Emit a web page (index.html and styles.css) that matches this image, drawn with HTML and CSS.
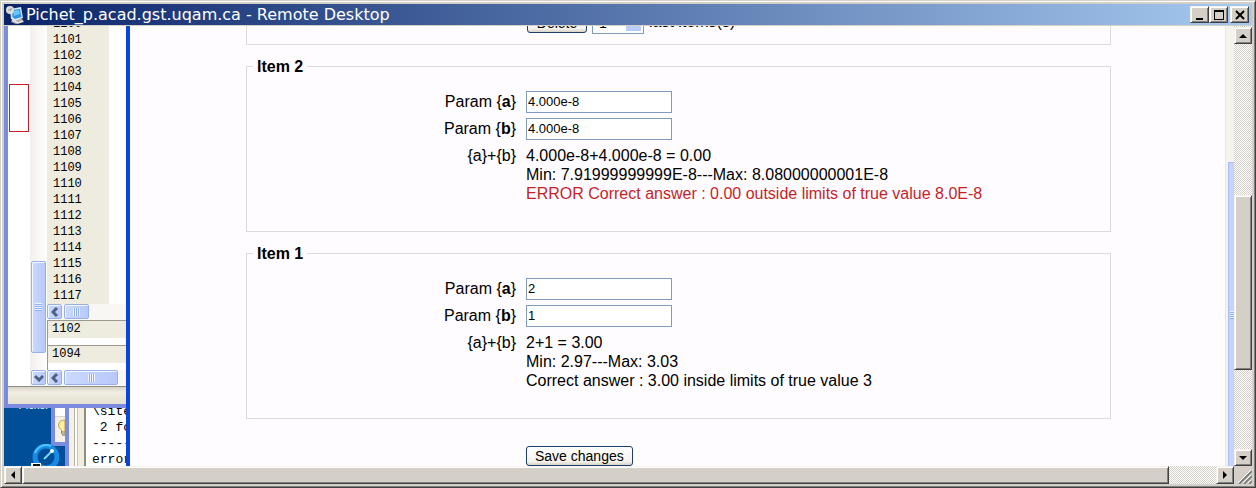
FILE: index.html
```html
<!DOCTYPE html>
<html lang="en">
<head>
<meta charset="utf-8">
<title>Pichet_p.acad.gst.uqam.ca - Remote Desktop</title>
<link rel="stylesheet" href="styles.css">
</head>
<body>
<div class="window">
  <header class="titlebar">
    <svg class="app-icon" viewBox="0 0 18 18" aria-hidden="true">
      <path d="M7 13h9l2 3-8 2-5-2z" fill="#a9aaa9"/>
      <path d="M4 3 15 1l2 11-8 3-4-2z" fill="#d4e6f4"/>
      <path d="M6 4 14 3l1.500 8L9 13 6.500 11z" fill="#2d93e6"/>
      <path d="M7 5l6-1 1 4-6 2z" fill="#6cc4f8"/>
      <path d="M6 14 12 17 17 15" stroke="#e8e7e4" stroke-width="1.500" fill="none"/>
      <circle cx="4" cy="4" r="4" fill="#dcdcd8"/><path d="M2 4h3V2" stroke="#8b8f96" fill="none"/>
    </svg>
    <h1 class="title">Pichet_p.acad.gst.uqam.ca - Remote Desktop</h1>
    <div class="controls">
      <button class="classic caption" aria-label="Minimize"><svg width="12" height="12" viewBox="0 0 12 12"><path d="M2 9h7v2H2z"/></svg></button>
      <button class="classic caption" aria-label="Maximize"><svg width="12" height="12" viewBox="0 0 12 12"><path d="M1 1h10v10H1zM2 3v7h8V3z" fill-rule="evenodd"/></svg></button>
      <button class="classic caption close" aria-label="Close"><svg width="12" height="12" viewBox="0 0 12 12"><path d="M2 2l8 8M10 2l-8 8" stroke="#000" stroke-width="2"/></svg></button>
    </div>
  </header>

  <div class="client">
    <aside class="behind">
      <section class="editor">
        <div class="panes">
          <div class="overview"><div class="marker"></div></div>
          <div class="xp-track">
            <div class="xp-thumb tall"><i class="grip"></i></div>
            <button class="xp-button" aria-label="Scroll down"><svg width="10" height="8" viewBox="0 0 10 8"><path d="M1 2l4 4 4-4"/></svg></button>
          </div>
          <div class="code">
            <ol class="lines">
              <li>1100</li><li>1101</li><li>1102</li><li>1103</li><li>1104</li><li>1105</li><li>1106</li><li>1107</li><li>1108</li><li>1109</li><li>1110</li><li>1111</li><li>1112</li><li>1113</li><li>1114</li><li>1115</li><li>1116</li><li>1117</li>
            </ol>
            <div class="xp-row">
              <button class="xp-button" aria-label="Scroll left"><svg width="8" height="10" viewBox="0 0 8 10"><path d="M6 1L2 5l4 4"/></svg></button>
              <div class="xp-thumb short"><i class="grip side"></i></div>
            </div>
            <div class="split"><span>1102</span></div>
            <div class="split"><span>1094</span></div>
            <div class="xp-row">
              <button class="xp-button" aria-label="Scroll left"><svg width="8" height="10" viewBox="0 0 8 10"><path d="M6 1L2 5l4 4"/></svg></button>
              <div class="xp-thumb wide"><i class="grip side"></i></div>
            </div>
          </div>
        </div>
        <div class="status"></div>
      </section>
      <section class="desktop">
        <div class="wallpaper">
          <span class="icon-label">Picker</span>
          <svg class="clock" width="28" height="22" viewBox="0 0 28 22" aria-hidden="true">
            <circle cx="15" cy="13" r="11" fill="none" stroke="#168ce5" stroke-width="5"/>
            <path d="M4 9A12 12 0 0 1 20 2" fill="none" stroke="#55c4ff" stroke-width="2"/>
            <path d="M13 15l8-8" stroke="#78d6ff" stroke-width="2"/><circle cx="21" cy="7" r="2" fill="#fff"/>
            <path d="M0 19h10v3H0z" fill="#fff"/><path d="M2 20h7v2H2z" fill="#111"/>
          </svg>
        </div>
        <div class="tool">
          <div class="tool-body">
            <svg width="10" height="20" viewBox="0 0 10 20" aria-hidden="true"><path d="M10 2Q4 2 3.500 7q0 3 3 5v4H10z" fill="#fff0a0" stroke="#bd9f4e"/><path d="M6 14h4M7 17h3" stroke="#777"/></svg>
          </div>
        </div>
        <div class="gutter"></div>
        <pre class="console">\site
 2 fo
-----
error</pre>
      </section>
    </aside>

    <main class="page">
      <form class="form">
        <div class="set first">
          <div class="delete-row">
            <button type="button" class="xp-push">Delete</button>
            <select class="count" id="count"><option>1</option></select>
            <label for="count">last items(s)</label>
          </div>
        </div>
        <fieldset class="set">
          <legend>Item 2</legend>
          <div class="grid">
            <label for="a2">Param {<b>a</b>}</label><input id="a2" type="text" value="4.000e-8">
            <label for="b2">Param {<b>b</b>}</label><input id="b2" type="text" value="4.000e-8">
            <span class="name">{a}+{b}</span>
            <div class="result">
              <p>4.000e-8+4.000e-8 = 0.00</p>
              <p>Min: 7.91999999999E-8---Max: 8.08000000001E-8</p>
              <p class="error">ERROR Correct answer : 0.00 outside limits of true value 8.0E-8</p>
            </div>
          </div>
        </fieldset>
        <fieldset class="set">
          <legend>Item 1</legend>
          <div class="grid">
            <label for="a1">Param {<b>a</b>}</label><input id="a1" type="text" value="2">
            <label for="b1">Param {<b>b</b>}</label><input id="b1" type="text" value="1">
            <span class="name">{a}+{b}</span>
            <div class="result">
              <p>2+1 = 3.00</p>
              <p>Min: 2.97---Max: 3.03</p>
              <p>Correct answer : 3.00 inside limits of true value 3</p>
            </div>
          </div>
        </fieldset>
        <div class="submit"><button type="button" class="xp-push">Save changes</button></div>
      </form>
    </main>

    <div class="inner-scroll"><div class="inner-thumb"><i class="grip"></i></div></div>

    <div class="scroll vertical">
      <button class="classic" aria-label="Scroll up"><svg width="8" height="4" viewBox="0 0 8 4"><path d="M4 0l4 4H0z"/></svg></button>
      <div class="before"></div>
      <div class="classic thumb"></div>
      <div class="after"></div>
      <button class="classic" aria-label="Scroll down"><svg width="8" height="4" viewBox="0 0 8 4"><path d="M0 0h8L4 4z"/></svg></button>
    </div>
  </div>

  <footer class="bottom">
    <div class="scroll horizontal">
      <button class="classic" aria-label="Scroll left"><svg width="4" height="8" viewBox="0 0 4 8"><path d="M4 0v8L0 4z"/></svg></button>
      <div class="classic thumb"></div>
      <div class="after"></div>
      <button class="classic" aria-label="Scroll right"><svg width="4" height="8" viewBox="0 0 4 8"><path d="M0 0v8l4-4z"/></svg></button>
    </div>
    <svg class="resize" width="18" height="18" viewBox="0 0 18 18" aria-hidden="true"><path d="M5 18L18 5M10 18l8-8M15 18l3-3" stroke="#808080" stroke-width="2"/><path d="M4 17L17 4M9 17l8-8M14 17l3-3" stroke="#fff"/></svg>
  </footer>
</div>
</body>
</html>
```
FILE: styles.css
```css
* { box-sizing: border-box; }
body { margin: 0; font: 16px/19px "Liberation Sans", Arial, sans-serif; color: #000; }
button { padding: 0; font: inherit; color: inherit; }
p { margin: 0; }
svg { display: block; flex: none; }

.window {
  display: flex; flex-direction: column; height: 100vh; padding: 3px;
  background: #d4d0c8; border: 1px solid;
  border-color: #d4d0c8 #404040 #404040 #d4d0c8;
  box-shadow: inset 1px 1px #fff, inset -1px -1px #808080;
}
.titlebar {
  display: flex; align-items: center; flex: none; height: 22px; padding: 0 3px 0 2px;
  background: linear-gradient(90deg, #0a246a, #a6caf0);
  border-bottom: 1px solid #d4d0c8;
}
.app-icon { width: 18px; height: 18px; }
.title {
  flex: 1; min-width: 0; margin: 0 0 0 2px; overflow: hidden; white-space: nowrap;
  font: 16px/21px "DejaVu Sans", Verdana, sans-serif; color: #fff;
}
.controls { display: flex; }
.classic {
  display: flex; align-items: center; justify-content: center; flex: none;
  background: #d4d0c8; border: 1px solid; border-radius: 0;
  border-color: #f4f2ee #404040 #404040 #f4f2ee;
  box-shadow: inset 1px 1px #fff, inset -1px -1px #808080;
}
.caption { width: 19px; height: 17px; }
.close { margin-left: 2px; }

.client { display: flex; flex: 1; min-height: 0; }

/* Windows that lie behind the browser */
.behind { display: flex; flex-direction: column; flex: none; width: 122px; overflow: hidden; }
.editor {
  display: flex; flex-direction: column; flex: none;
  border: solid #7a8be0; border-width: 0 0 4px 4px;
}
.panes { display: flex; background: #fff; border-bottom: 1px solid #8e8c84; }
.overview { width: 22px; padding: 58px 1px 0; }
.marker { height: 48px; border: 1px solid #c42026; }
.xp-track {
  display: flex; flex-direction: column; justify-content: flex-end; gap: 17px;
  width: 17px; padding: 0 1px 1px; background: linear-gradient(90deg, #f2efec, #fff);
}
.xp-thumb, .xp-button {
  display: flex; align-items: center; justify-content: center; flex: none;
  background: linear-gradient(90deg, #cbd9fd, #b7c9f9);
  border: 1px solid #98b0e8; border-radius: 2px; box-shadow: inset 1px 1px #f3f7ff;
}
.xp-button { width: 15px; height: 15px; }
.xp-button path { fill: none; stroke: #4d6185; stroke-width: 3; }
.tall { height: 92px; }
.short { width: 25px; height: 15px; }
.wide { width: 54px; height: 15px; }
.grip {
  width: 7px; height: 8px;
  background: repeating-linear-gradient(#eef4ff 0 1px, #8cb0f8 1px 2px);
}
.side { background: repeating-linear-gradient(90deg, #eef4ff 0 1px, #8cb0f8 1px 2px); }
.code { flex: 1; min-width: 0; font: 12px/16px "Liberation Mono", "Courier New", monospace; }
.lines {
  width: 62px; height: 278px; margin: 0; padding: 0 0 0 6px; overflow: hidden;
  list-style: none; background: #eeebdf;
}
.lines li:first-child { margin-top: -10px; }
.xp-row { display: flex; gap: 2px; height: 16px; background: #f8f7f3; }
.split { height: 25px; border: solid #9c9a90; border-width: 1px 0 0 1px; }
.split span { display: block; height: 17px; padding-left: 4px; background: #eeebdf; }
.status { height: 17px; background: linear-gradient(#d6d3c4, #f0eee3 30%, #e4e0d0); }

.desktop { display: flex; flex: 1; min-height: 0; overflow: hidden; background: #fff; }
.wallpaper {
  display: flex; flex-direction: column; flex: none; justify-content: space-between;
  align-items: flex-end; width: 47px; background: #004e98;
}
.icon-label { margin: -9px 2px 0 0; font-size: 11px; line-height: 13px; color: #fff; }
.clock { position: relative; z-index: 1; margin-right: -8px; }
.tool { flex: none; width: 18px; background: #004e98; border-right: 4px solid #7a8be0; }
.tool-body {
  height: 38px; padding-top: 10px; overflow: hidden;
  background: linear-gradient(#fff 8px, #d8d5c8 8px 9px, #f3f1e8 9px);
  border: solid #7a8be0; border-width: 0 0 4px 4px;
}
.gutter {
  flex: none; width: 17px;
  background: linear-gradient(90deg, #f4f2e8 5px, #b8b3a0 5px 6px, #fff 6px 8px, #c8c4b4 8px 9px, #f0eddf 9px 15px, #8e8b80 15px);
}
.console {
  flex: 1; min-width: 0; margin: -4px 0 0; padding-left: 6px; overflow: hidden;
  font: 13px/16px "Liberation Mono", "Courier New", monospace;
}

/* Browser page */
.page { flex: 1; min-width: 0; overflow: hidden; background: #fffcff; border-left: 4px solid #0845e0; }
.form { display: flex; flex-direction: column; gap: 11px; margin: 0 114px 0 116px; }
.set { min-width: 0; margin: 0; padding: 15px 0 28px; border: 1px solid #dddadf; }
.set legend { margin-left: 6px; padding: 2px 4px 0; font-weight: bold; line-height: 18px; }
.first { height: 19px; padding: 0; border-top: 0; overflow: hidden; }
.delete-row { display: flex; align-items: center; gap: 5px; margin: -14px 0 0 280px; }
.delete-row .xp-push { width: 60px; }
.delete-row label { line-height: 18px; padding-bottom: 2px; }
.count {
  appearance: none; width: 52px; height: 22px; padding: 0 6px; border: 1px solid #7f9db9; border-radius: 0;
  font: 14px/18px "Liberation Sans", Arial, sans-serif; color: #000;
  background: linear-gradient(#c2d2fc, #b9cbf8) right 2px center / 15px 16px no-repeat #fff;
}
.grid { display: grid; grid-template-columns: minmax(0, 269px) minmax(0, 1fr); gap: 5px 10px; }
.grid label, .name { text-align: right; }
.grid label { line-height: 22px; }
.grid input {
  width: 146px; height: 22px; padding: 0 1px 2px; border: 1px solid #7f9db9; background: #fff;
  font: 13px/18px "Liberation Sans", Arial, sans-serif; color: #000;
}
.name, .result { padding-top: 1px; }
.result { white-space: nowrap; }
.error { color: #c81e28; }
.submit { margin: 16px 0 0 280px; }
.xp-push {
  display: block; height: 20px; padding: 0 8px; border: 1px solid #1c3f6e; border-radius: 3px;
  background: linear-gradient(#fff, #f4f3ee 80%, #d8d3c6); font-size: 14px; line-height: 18px;
}
.inner-scroll {
  display: flex; flex-direction: column; flex: none; width: 9px; padding: 136px 0 0 2px;
  background: #f4f3ec; border-left: 1px solid #e8e6e0;
}
.inner-thumb {
  display: flex; align-items: center; justify-content: flex-end; flex: 1;
  background: #c4d2fc; border: solid #a9bdf4; border-width: 1px 0 0 1px;
}
.inner-thumb .grip { width: 4px; }

/* Outer scroll bars */
.scroll { display: flex; background: repeating-conic-gradient(#fff 0 25%, #d4d0c8 0 50%) 0 0 / 2px 2px; }
.vertical { flex: none; flex-direction: column; width: 18px; padding-top: 1px; }
.vertical button { height: 17px; }
.vertical .before { flex: 152; }
.vertical .thumb { flex: 174; }
.vertical .after { flex: 79; }
.bottom { display: flex; flex: none; height: 18px; }
.horizontal { flex: 1; }
.horizontal button { width: 18px; }
.horizontal .thumb { flex: 1147; }
.horizontal .after { flex: 47; }
```
